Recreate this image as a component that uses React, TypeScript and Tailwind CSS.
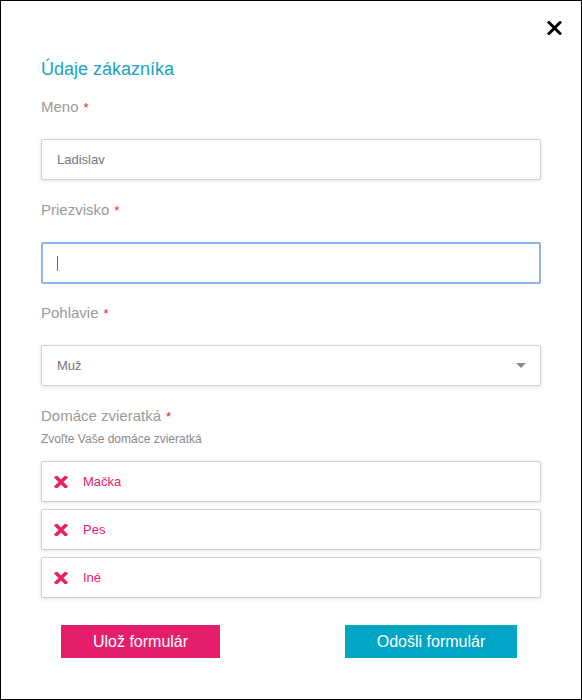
const Req = () => <span className="ml-[5px] text-[13px] leading-none text-[#f0141e]">*</span>;

const fieldBox =
  "h-[41px] w-full rounded-[2px] border border-[#d2d2d2] bg-white shadow-[0_1px_4px_rgba(0,0,0,0.12)] flex items-center";

const pets = ["Mačka", "Pes", "Iné"];

function Label({ text }: { text: string }) {
  return (
    <div className="h-5 text-[15px] leading-5 text-[#9a9a9a]">
      {text}
      <Req />
    </div>
  );
}

const PinkX = () => (
  <svg width="14" height="12" viewBox="0 0 14 12">
    <path d="M2.5 1.5 L11.5 10.5 M11.5 1.5 L2.5 10.5" stroke="#e8206a" strokeWidth="3.6" strokeLinecap="square" />
  </svg>
);

export default function App() {
  return (
    <div
      className="relative w-[582px] h-[700px] border border-black bg-white px-10 pt-[56px]"
      style={{ fontFamily: '"Liberation Sans", Arial, sans-serif' }}
    >
      {/* close */}
      <button className="absolute top-[20px] right-[19px] p-0">
        <svg width="15" height="14" viewBox="0 0 15 14">
          <path d="M2 1.5 L13 12.5 M13 1.5 L2 12.5" stroke="#000" strokeWidth="3" strokeLinecap="square" />
        </svg>
      </button>

      <h2 className="text-[18px] leading-6 text-[#1aa2c6]">Údaje zákazníka</h2>

      {/* Meno */}
      <div className="mt-4">
        <Label text="Meno" />
        <div className={`${fieldBox} mt-[22px] px-[15px] text-[13px] text-[#777]`}>Ladislav</div>
      </div>

      {/* Priezvisko */}
      <div className="mt-5">
        <Label text="Priezvisko" />
        <div className="mt-[22px] h-[42px] w-full rounded-[2px] border-2 border-[#8fb3ee] bg-white flex items-center px-[14px]">
          <div className="h-[15px] w-px bg-[#666]" />
        </div>
      </div>

      {/* Pohlavie */}
      <div className="mt-[19px]">
        <Label text="Pohlavie" />
        <div className={`${fieldBox} mt-[22px] pl-[15px] pr-[14px] justify-between text-[13px] text-[#777]`}>
          <span>Muž</span>
          <svg width="10" height="5" viewBox="0 0 10 5">
            <path d="M0 0 H10 L5 5 Z" fill="#888" />
          </svg>
        </div>
      </div>

      {/* Domace zvieratka */}
      <div className="mt-5">
        <Label text="Domáce zvieratká" />
        <div className="mt-[5px] text-[12px] leading-4 text-[#8a8a8a]">Zvoľte Vaše domáce zvieratká</div>
        <div className="mt-[14px] flex flex-col gap-[7px]">
          {pets.map((p) => (
            <div key={p} className={`${fieldBox} pl-[12px] text-[13px] text-[#e8206a]`}>
              <PinkX />
              <span className="ml-[15px]">{p}</span>
            </div>
          ))}
        </div>
      </div>

      {/* buttons */}
      <div className="mt-[27px] flex justify-between pl-5 pr-6">
        <button className="h-[33px] w-[159px] bg-[#e51e6c] text-[16px] text-white">Ulož formulár</button>
        <button className="h-[33px] w-[172px] bg-[#00a6c5] text-[16px] text-white">Odošli formulár</button>
      </div>
    </div>
  );
}
